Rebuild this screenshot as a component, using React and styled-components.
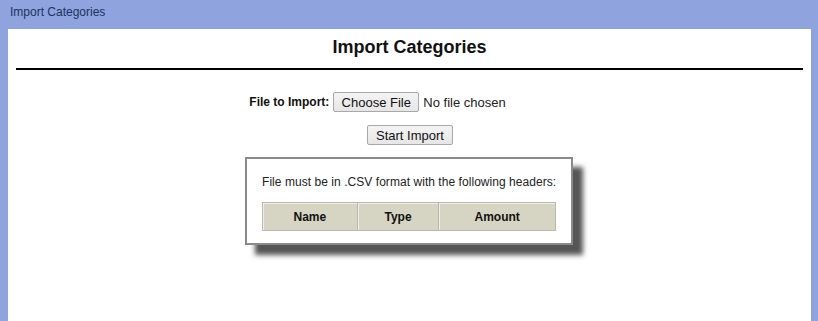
import React from 'react';
import styled, { createGlobalStyle } from 'styled-components';

const GlobalStyle = createGlobalStyle`
  html, body {
    margin: 0;
    padding: 0;
    height: 100%;
    background: #8fa3de;
    font-family: "Liberation Sans", Arial, sans-serif;
  }
  #root {
    height: 100%;
  }
`;

const Page = styled.div`
  display: flex;
  flex-direction: column;
  height: 100%;
  padding: 0 7px 0 8px;
  box-sizing: border-box;
`;

const TopBar = styled.div`
  height: 29px;
  display: flex;
  align-items: center;
  padding: 0 0 5px 2px;
  box-sizing: border-box;
  font-size: 12px;
  color: #1d3361;
`;

const Panel = styled.div`
  flex: 1;
  background: #ffffff;
  padding: 0 8px;
  display: flex;
  flex-direction: column;
  align-items: center;
  color: #111;
`;

const Title = styled.h1`
  margin: 0;
  padding-top: 8px;
  height: 31px;
  font-size: 18px;
  font-weight: bold;
  line-height: 20px;
  color: #111;
`;

const Rule = styled.div`
  align-self: stretch;
  height: 2px;
  background: #000;
  margin-bottom: 22px;
`;

const FormRow = styled.div`
  display: flex;
  align-items: center;
  gap: 4px;
  height: 20px;
  margin-right: 64px;
`;

const Label = styled.span`
  font-size: 12px;
  font-weight: bold;
`;

const Button = styled.button`
  font-family: "Liberation Sans", Arial, sans-serif;
  font-size: 13px;
  height: 20px;
  width: ${(p) => p.$w}px;
  padding: 0;
  background: linear-gradient(#f4f4f4, #e6e6e6);
  border: 1px solid #a8a8a8;
  border-radius: 2px;
  color: #111;
`;

const NoFile = styled.span`
  font-size: 13px;
  color: #222;
`;

const ImportRow = styled.div`
  margin-top: 13px;
  margin-left: 1px;
`;

const InfoBox = styled.div`
  margin-top: 12px;
  margin-right: 1px;
  width: 328px;
  height: 88px;
  box-sizing: border-box;
  border: 2px solid #8a8a8a;
  box-shadow: 10px 10px 5px #555;
  padding: 16px 15px 0 15px;
  font-size: 12px;
  color: #222;
`;

const Note = styled.div`
  height: 14px;
  line-height: 14px;
  margin-bottom: 13px;
  white-space: nowrap;
  letter-spacing: 0.05px;
`;

const Table = styled.table`
  border-collapse: collapse;
  width: 294px;
`;

const Th = styled.th`
  width: ${(p) => p.$w}px;
  height: 28px;
  padding: 0;
  box-sizing: border-box;
  background: #d6d5c4;
  border: 1px solid #b8b8ae;
  box-shadow: inset 1px 1px 0 #eeeeea;
  font-size: 12px;
  font-weight: bold;
  color: #111;
`;

export default function App() {
  return (
    <>
      <GlobalStyle />
      <Page>
        <TopBar>Import Categories</TopBar>
        <Panel>
          <Title>Import Categories</Title>
          <Rule />
          <FormRow>
            <Label>File to Import:</Label>
            <Button $w={86}>Choose File</Button>
            <NoFile>No file chosen</NoFile>
          </FormRow>
          <ImportRow>
            <Button $w={86}>Start Import</Button>
          </ImportRow>
          <InfoBox>
            <Note>File must be in .CSV format with the following headers:</Note>
            <Table>
              <thead>
                <tr>
                  <Th $w={95}>Name</Th>
                  <Th $w={82}>Type</Th>
                  <Th $w={117}>Amount</Th>
                </tr>
              </thead>
            </Table>
          </InfoBox>
        </Panel>
      </Page>
    </>
  );
}
